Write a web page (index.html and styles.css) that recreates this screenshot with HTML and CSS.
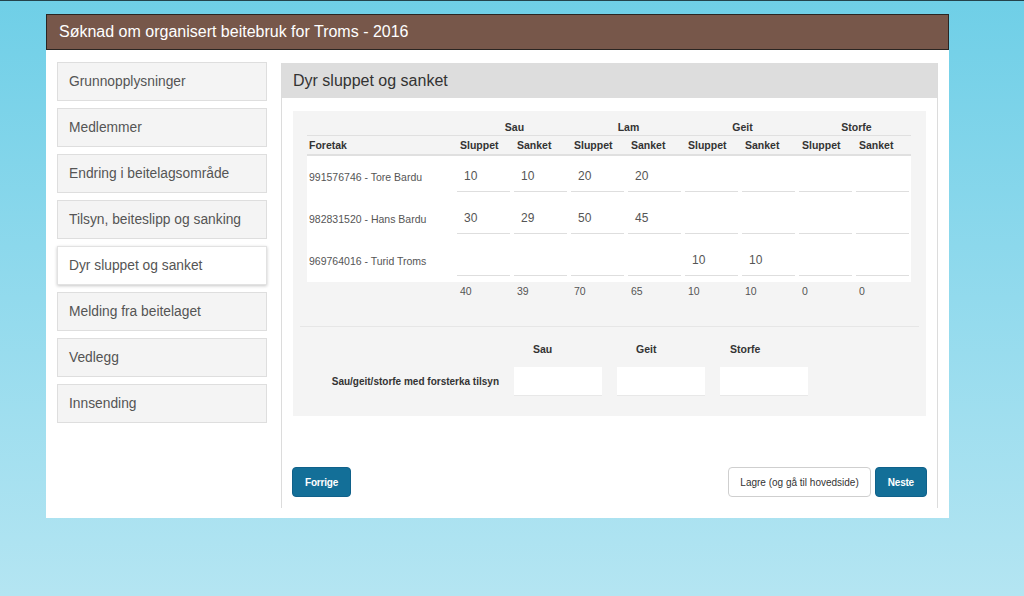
FILE: index.html
```html
<!DOCTYPE html>
<html lang="no">
<head>
<meta charset="utf-8">
<title>Søknad om organisert beitebruk</title>
<link rel="stylesheet" href="styles.css">
</head>
<body>
<div class="page">
  <div class="app">
    <header class="app-header">Søknad om organisert beitebruk for Troms - 2016</header>
    <div class="app-main">
      <nav class="sidenav">
        <div class="nav-item">Grunnopplysninger</div>
        <div class="nav-item">Medlemmer</div>
        <div class="nav-item">Endring i beitelagsområde</div>
        <div class="nav-item">Tilsyn, beiteslipp og sanking</div>
        <div class="nav-item active">Dyr sluppet og sanket</div>
        <div class="nav-item">Melding fra beitelaget</div>
        <div class="nav-item">Vedlegg</div>
        <div class="nav-item">Innsending</div>
      </nav>
      <section class="panel">
        <div class="panel-title">Dyr sluppet og sanket</div>
        <div class="panel-body">
          <div class="well">
            <table class="animals">
              <colgroup>
                <col class="c-name">
                <col><col><col><col><col><col><col><col>
              </colgroup>
              <thead>
                <tr class="group-row">
                  <th></th>
                  <th colspan="2">Sau</th>
                  <th colspan="2">Lam</th>
                  <th colspan="2">Geit</th>
                  <th colspan="2">Storfe</th>
                </tr>
                <tr class="sub-row">
                  <th>Foretak</th>
                  <th>Sluppet</th><th>Sanket</th>
                  <th>Sluppet</th><th>Sanket</th>
                  <th>Sluppet</th><th>Sanket</th>
                  <th>Sluppet</th><th>Sanket</th>
                </tr>
              </thead>
              <tbody>
                <tr class="data-row">
                  <td class="name">991576746 - Tore Bardu</td>
                  <td><div class="field">10</div></td><td><div class="field">10</div></td>
                  <td><div class="field">20</div></td><td><div class="field">20</div></td>
                  <td><div class="field"></div></td><td><div class="field"></div></td>
                  <td><div class="field"></div></td><td><div class="field"></div></td>
                </tr>
                <tr class="data-row">
                  <td class="name">982831520 - Hans Bardu</td>
                  <td><div class="field">30</div></td><td><div class="field">29</div></td>
                  <td><div class="field">50</div></td><td><div class="field">45</div></td>
                  <td><div class="field"></div></td><td><div class="field"></div></td>
                  <td><div class="field"></div></td><td><div class="field"></div></td>
                </tr>
                <tr class="data-row">
                  <td class="name">969764016 - Turid Troms</td>
                  <td><div class="field"></div></td><td><div class="field"></div></td>
                  <td><div class="field"></div></td><td><div class="field"></div></td>
                  <td><div class="field">10</div></td><td><div class="field">10</div></td>
                  <td><div class="field"></div></td><td><div class="field"></div></td>
                </tr>
              </tbody>
              <tfoot>
                <tr class="sum-row">
                  <td></td>
                  <td>40</td><td>39</td><td>70</td><td>65</td>
                  <td>10</td><td>10</td><td>0</td><td>0</td>
                </tr>
              </tfoot>
            </table>
            <div class="divider"></div>
            <div class="extra">
              <div></div>
              <div class="extra-head">Sau</div>
              <div class="extra-head">Geit</div>
              <div class="extra-head narrow">Storfe</div>
              <div class="extra-label">Sau/geit/storfe med forsterka tilsyn</div>
              <div class="box-input"></div>
              <div class="box-input"></div>
              <div class="box-input"></div>
            </div>
          </div>
          <div class="actions">
            <button class="btn btn-primary">Forrige</button>
            <div class="actions-right">
              <button class="btn btn-default">Lagre (og gå til hovedside)</button>
              <button class="btn btn-primary">Neste</button>
            </div>
          </div>
        </div>
      </section>
    </div>
  </div>
</div>
</body>
</html>
```

FILE: styles.css
```css
html, body {
  margin: 0;
  padding: 0;
  height: 100%;
}

body {
  font-family: "Liberation Sans", Arial, sans-serif;
  background: linear-gradient(to bottom, #6fcfe7 0%, #92daed 50%, #b4e5f2 100%);
  border-top: 1px solid #24434c;
  box-sizing: border-box;
  min-height: 596px;
  color: #333;
}

.page {
  padding-top: 13px;
  padding-left: 46px;
}

.app {
  width: 903px;
  background: #fff;
}

.app-header {
  height: 34px;
  line-height: 34px;
  background: #77574a;
  border: 1px solid #2a2522;
  padding-left: 12px;
  color: #fff;
  font-size: 16px;
}

.app-main {
  display: flex;
  align-items: flex-start;
  gap: 14px;
  padding: 12px 11px 10px 11px;
}

.sidenav {
  width: 210px;
  flex: none;
  display: flex;
  flex-direction: column;
  gap: 7px;
}

.nav-item {
  height: 37px;
  line-height: 37px;
  background: #f4f4f4;
  border: 1px solid #dedede;
  padding-left: 11px;
  font-size: 13.8px;
  color: #555;
  white-space: nowrap;
}

.nav-item.active {
  background: #fff;
  border-color: #e2e2e2;
  box-shadow: 0 1px 3px rgba(0, 0, 0, 0.22);
}

.panel {
  width: 657px;
  flex: none;
  box-sizing: border-box;
  margin-top: 1px;
  border-left: 1px solid #dcdcdc;
  border-right: 1px solid #dcdcdc;
}

.panel-title {
  height: 35px;
  line-height: 36px;
  background: #dddddd;
  padding-left: 11px;
  font-size: 16px;
  color: #333;
}

.panel-body {
  padding: 13px 11px 11px 11px;
}

.well {
  background: #f4f4f4;
  padding: 7px 7px 20px 7px;
}

.animals {
  width: 604px;
  margin-left: 7px;
  table-layout: fixed;
  border-collapse: collapse;
  font-size: 10.5px;
}

.animals col.c-name {
  width: 148px;
}

.animals th {
  font-weight: bold;
  color: #333;
  text-align: left;
  padding: 0 0 0 5px;
  height: 18px;
  white-space: nowrap;
}

.group-row th {
  text-align: center;
  border-bottom: 1px solid #e0e0e0;
  height: 17px;
}

.sub-row th {
  border-bottom: 2px solid #e0e0e0;
  height: 18px;
}

.sub-row th:first-child {
  padding-left: 2px;
}

.data-row {
  background: #fff;
}

.data-row td {
  height: 42px;
  padding: 0 2px;
  vertical-align: top;
}

.data-row td.name {
  padding-left: 2px;
  vertical-align: middle;
  color: #555;
  white-space: nowrap;
}

.field {
  margin-top: 2px;
  height: 34px;
  line-height: 36px;
  border-bottom: 1px solid #dedede;
  box-sizing: border-box;
  padding-left: 7px;
  font-size: 12px;
  color: #555555;
  background: #fff;
}

.sum-row td {
  height: 18px;
  padding: 0 0 0 5px;
  color: #555555;
}

.divider {
  height: 1px;
  background: #e6e6e6;
  margin-top: 26px;
}

.extra {
  display: grid;
  grid-template-columns: 199px 88px 88px 88px;
  column-gap: 15px;
  row-gap: 10px;
  padding-top: 15px;
  font-size: 10.5px;
}

.extra-head {
  font-weight: bold;
  color: #333;
  height: 15px;
  line-height: 15px;
  padding-left: 19px;
}

.extra-head.narrow {
  padding-left: 10px;
}

.extra-label {
  font-size: 10px;
  font-weight: bold;
  color: #333;
  text-align: right;
  align-self: center;
  white-space: nowrap;
}

.box-input {
  height: 29px;
  background: #fff;
  border-bottom: 1px solid #e8e8e8;
  box-sizing: border-box;
}

.actions {
  display: flex;
  justify-content: space-between;
  margin: 51px -1px 0 -1px;
}

.actions-right {
  display: flex;
  gap: 4px;
}

.btn {
  height: 30px;
  font-family: "Liberation Sans", Arial, sans-serif;
  font-size: 10px;
  border-radius: 4px;
  padding: 0 12px;
  cursor: pointer;
}

.btn-primary {
  background: #136f98;
  border: 1px solid #10618a;
  color: #fff;
  font-weight: bold;
  letter-spacing: -0.2px;
}

.btn-default {
  background: #fff;
  border: 1px solid #cfcfcf;
  color: #333;
  padding: 0 11px;
}
```
